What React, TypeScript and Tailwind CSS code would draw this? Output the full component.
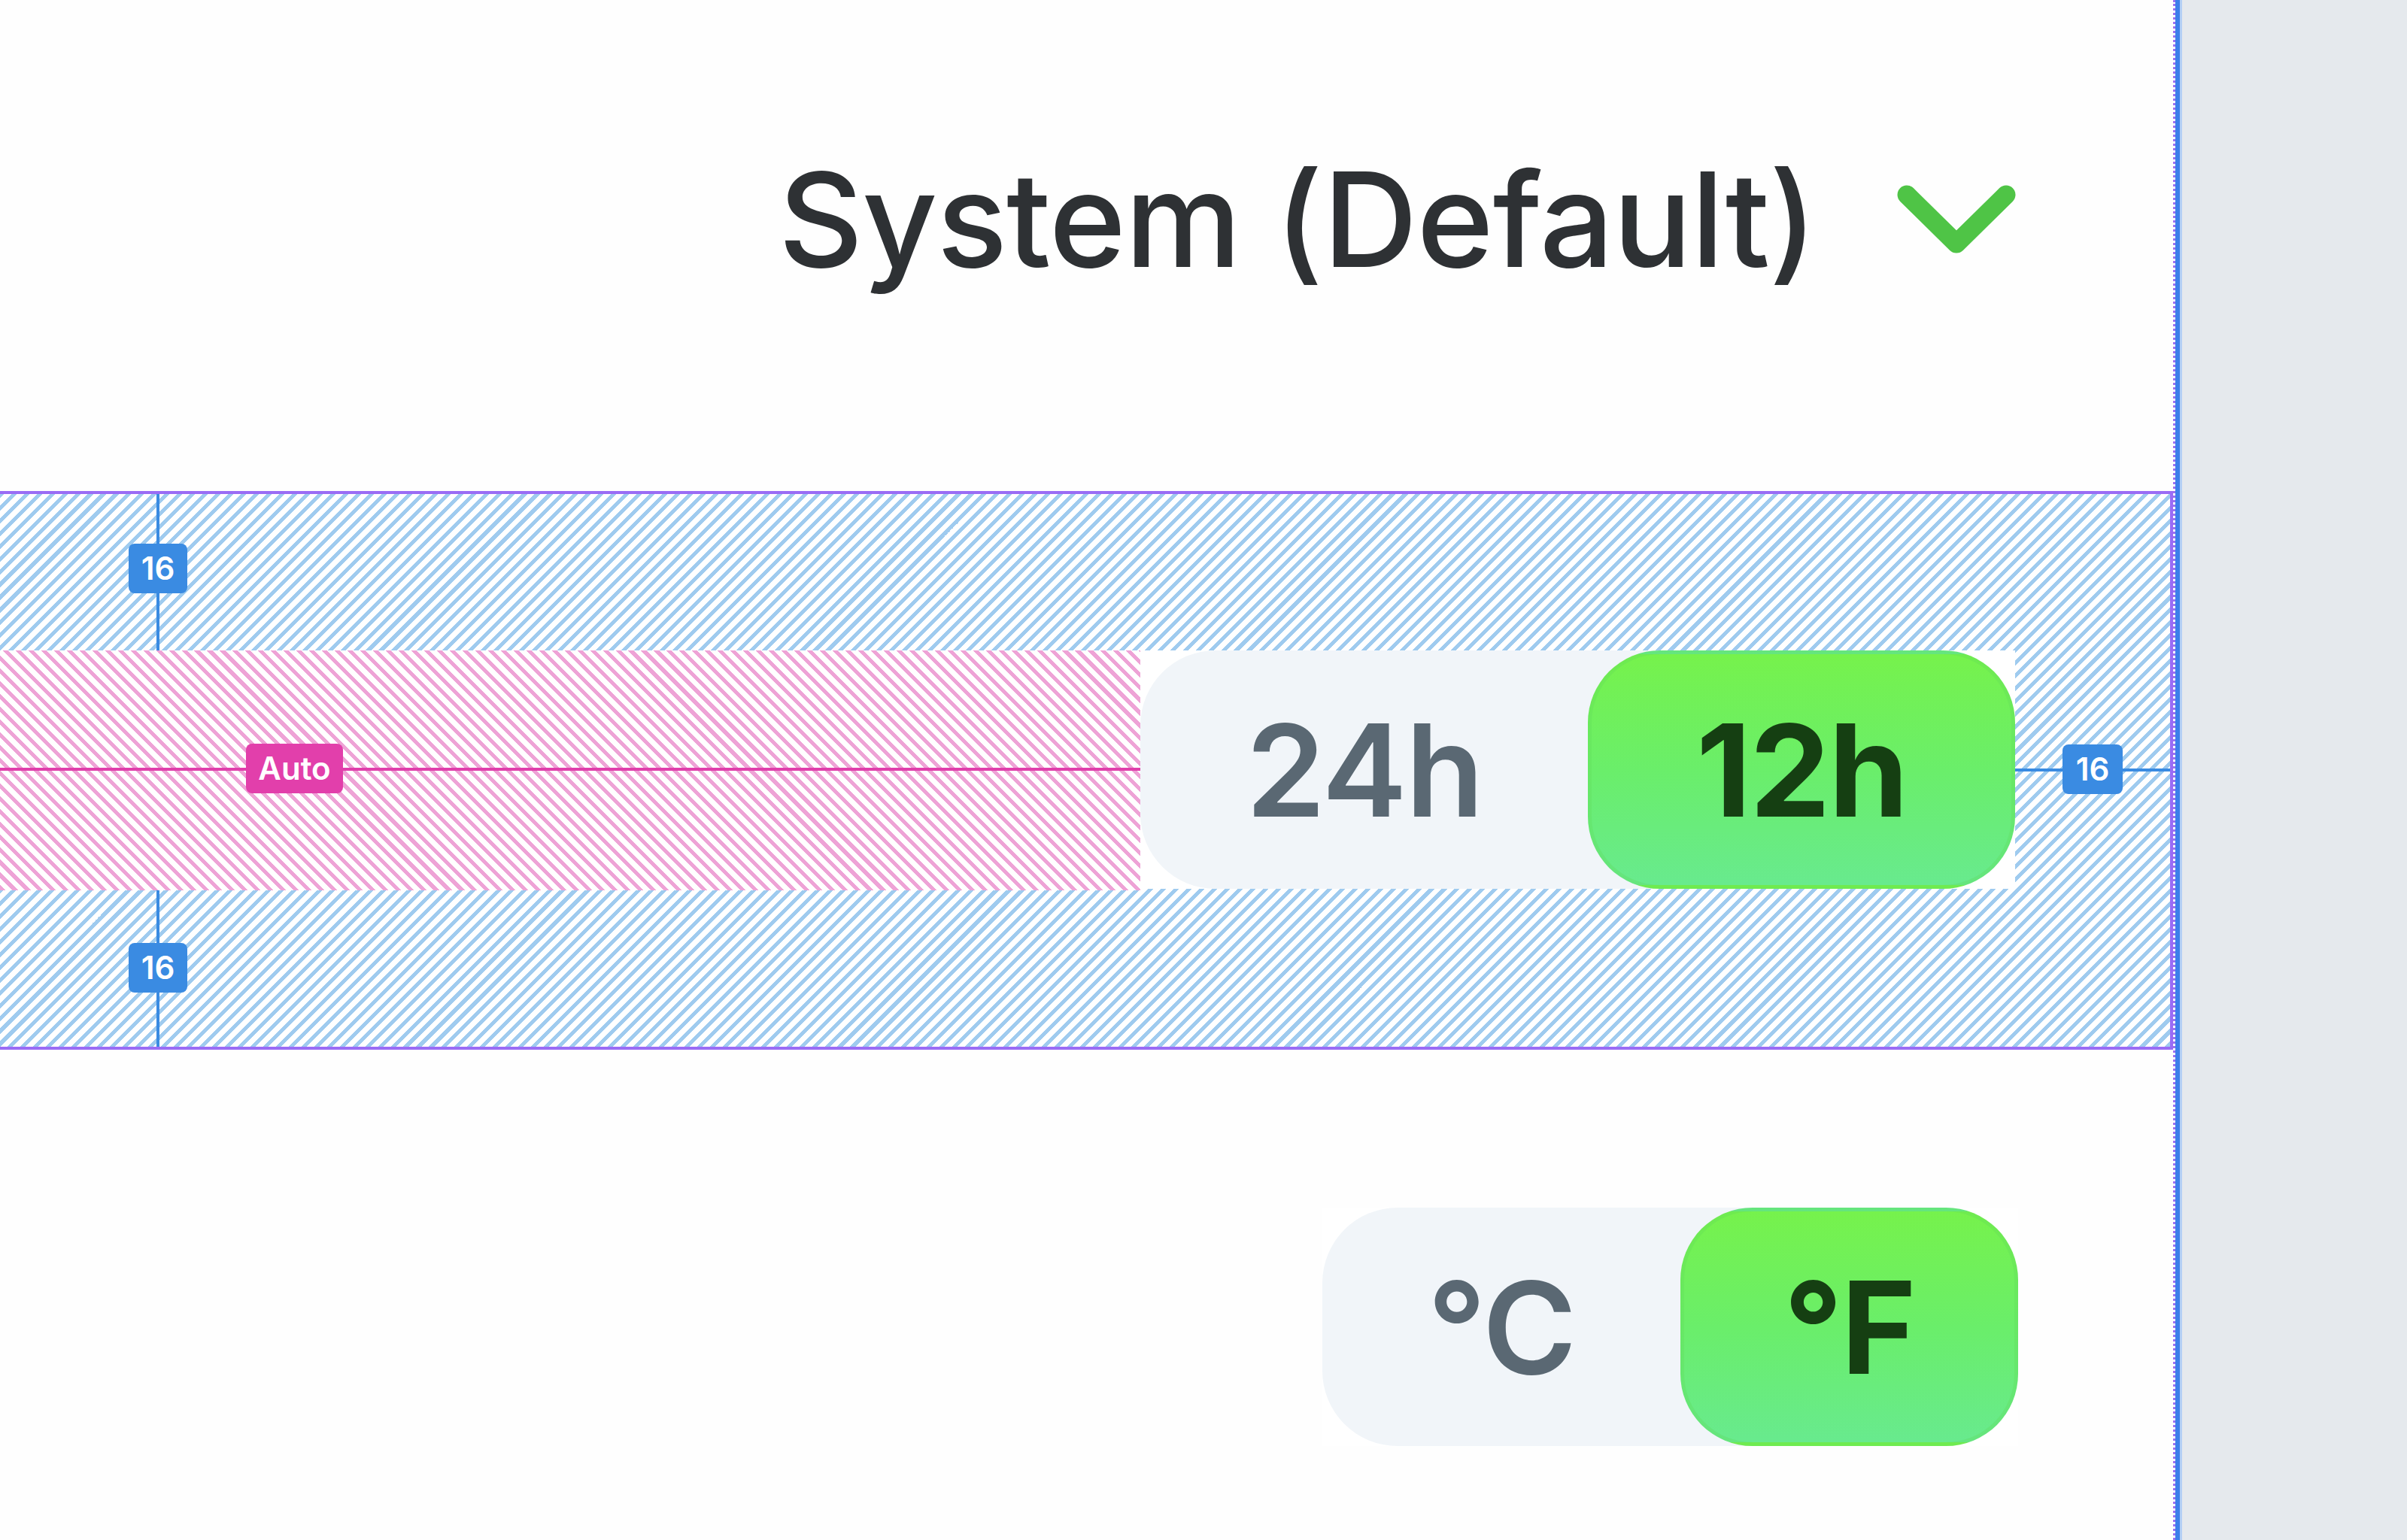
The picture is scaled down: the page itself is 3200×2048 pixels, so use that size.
const BLUE_HATCH =
  'bg-[repeating-linear-gradient(-45deg,#9fcbef_0px,#9fcbef_5px,#ffffff_5px,#ffffff_12px)]'
const PINK_HATCH =
  'bg-[repeating-linear-gradient(45deg,#eea3d6_0px,#eea3d6_5px,#ffffff_5px,#ffffff_12px)]'

function Chevron() {
  return (
    <svg width="164" height="100" viewBox="0 0 164 100" fill="none" aria-hidden>
      <path
        d="M16 17L82 82L148 17"
        stroke="#4fc446"
        strokeWidth="25"
        strokeLinecap="round"
        strokeLinejoin="round"
      />
    </svg>
  )
}

function SpacingBadge({ className }: { className: string }) {
  return (
    <span
      className={`absolute flex h-[66px] w-[78px] items-center justify-center rounded-[8px] bg-[#3a8be2] text-[42px] font-semibold leading-none text-white ${className}`}
    >
      16
    </span>
  )
}

function Segmented({
  left,
  right,
  leftWidth,
  rightWidth,
}: {
  left: string
  right: string
  leftWidth: string
  rightWidth: string
}) {
  return (
    <div className="flex h-[317px] bg-white">
      <div className="flex h-full rounded-[100px] bg-[#f1f5f9]">
        <div
          className={`flex h-full items-center justify-center text-[170px] font-semibold leading-none tracking-[-2px] text-[#5a6873] ${leftWidth}`}
        >
          {left}
        </div>
        <div
          className={`flex h-full items-center justify-center rounded-[96px] border-[5px] border-[#5fdc5a]/30 bg-[linear-gradient(180deg,#76f24c_0%,#6aee6a_50%,#68ea8e_100%)] text-[170px] font-bold leading-none tracking-[-2px] text-[#153f12] ${rightWidth}`}
        >
          {right}
        </div>
      </div>
    </div>
  )
}

export default function App() {
  return (
    <div className="flex h-[2048px] w-[3200px] overflow-hidden bg-[#e5e9ed] font-['Inter','Noto_Sans',sans-serif]">
      <div className="flex w-[2892px] shrink-0 flex-col border-r-[3px] border-dotted border-[#9d6ff2] bg-[#fefefe]">
        <div className="flex h-[653px] shrink-0 items-center justify-end gap-[104px] pb-[70px] pr-[206px]">
          <span className="text-[174px] font-medium leading-none tracking-[-1px] text-[#2e3134]">
            System (Default)
          </span>
          <Chevron />
        </div>

        <div
          className={`relative flex h-[743px] shrink-0 border-y-4 border-r-4 border-[#9a6cf5] py-[208px] pr-[206px] ${BLUE_HATCH}`}
        >
          <span className="absolute left-[208px] top-0 h-[208px] w-[4px] bg-[#3a8be2]" />
          <SpacingBadge className="left-[171px] top-[66px]" />
          <span className="absolute bottom-0 left-[208px] h-[210px] w-[4px] bg-[#3a8be2]" />
          <SpacingBadge className="bottom-[72px] left-[171px]" />
          <span className="absolute right-0 top-[365px] h-[4px] w-[206px] bg-[#3a8be2]" />
          <SpacingBadge className="right-[63px] top-[333px] w-[80px]" />

          <div className={`relative flex-1 ${PINK_HATCH}`}>
            <span className="absolute left-0 right-0 top-[156px] h-[4px] bg-[#e03fab]" />
            <span className="absolute left-[327px] top-[124px] flex h-[66px] w-[129px] items-center justify-center rounded-[8px] bg-[#e23fab] text-[42px] font-semibold leading-none text-white">
              Auto
            </span>
          </div>
          <Segmented left="24h" right="12h" leftWidth="w-[595px]" rightWidth="w-[568px]" />
        </div>

        <div className="flex flex-1 justify-end pr-[206px] pt-[210px]">
          <Segmented left="°C" right="°F" leftWidth="w-[476px]" rightWidth="w-[449px]" />
        </div>
      </div>
      <div className="w-[6px] shrink-0 bg-[#3c7fea]" />
      <div className="w-[3px] shrink-0 bg-[#b3cff5]" />
      <div className="flex-1 bg-[#e5e9ed]" />
    </div>
  )
}
